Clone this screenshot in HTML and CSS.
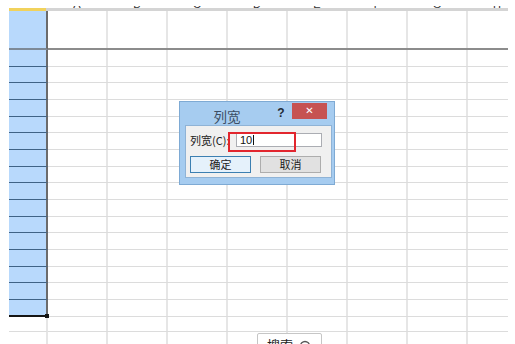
FILE: index.html
```html
<!DOCTYPE html>
<html lang="zh-CN">
<head>
  <meta charset="UTF-8">
  <meta name="viewport" content="width=device-width, initial-scale=1.0">
  <title>列宽</title>
  <link rel="stylesheet" href="styles.css">
</head>
<body>
  <div class="sheet">
    <!-- 列标题 (只露出底部) -->
    <div class="col-head">
      <div class="col-label">A</div>
      <div class="col-label">B</div>
      <div class="col-label">C</div>
      <div class="col-label">D</div>
      <div class="col-label">E</div>
      <div class="col-label">F</div>
      <div class="col-label">G</div>
      <div class="col-label">H</div>
    </div>
    <div class="col-band"><div class="corner"></div></div>

    <div class="row first"><div class="rh"></div><div class="cells"></div></div>
    <div class="row"><div class="rh"></div><div class="cells"></div></div>
    <div class="row"><div class="rh"></div><div class="cells"></div></div>
    <div class="row"><div class="rh"></div><div class="cells"></div></div>
    <div class="row"><div class="rh"></div><div class="cells"></div></div>
    <div class="row"><div class="rh"></div><div class="cells"></div></div>
    <div class="row"><div class="rh"></div><div class="cells"></div></div>
    <div class="row"><div class="rh"></div><div class="cells"></div></div>
    <div class="row"><div class="rh"></div><div class="cells"></div></div>
    <div class="row"><div class="rh"></div><div class="cells"></div></div>
    <div class="row"><div class="rh"></div><div class="cells"></div></div>
    <div class="row"><div class="rh"></div><div class="cells"></div></div>
    <div class="row"><div class="rh"></div><div class="cells"></div></div>
    <div class="row"><div class="rh"></div><div class="cells"></div></div>
    <div class="row"><div class="rh"></div><div class="cells"></div></div>
    <div class="row"><div class="rh"></div><div class="cells"></div></div>
    <div class="row last"><div class="rh"></div><div class="cells"></div></div>
    <div class="row tail"><div class="rh"></div><div class="cells"></div></div>
    <div class="row tail"><div class="rh"></div><div class="cells"></div></div>
  </div>

  <!-- 列宽 对话框 -->
  <div class="dialog">
    <div class="dlg-title">
      <span class="dlg-caption">列宽</span>
      <span class="dlg-help">?</span>
      <span class="dlg-close">&#x2715;</span>
    </div>
    <div class="dlg-panel">
      <div class="dlg-field">
        <span class="dlg-label">列宽(C):</span>
        <span class="dlg-input">10<span class="caret"></span></span>
      </div>
      <div class="dlg-buttons">
        <button class="btn btn-default">确定</button>
        <button class="btn">取消</button>
      </div>
    </div>
    <div class="mark"></div>
  </div>

  <div class="search-chip">
    <span>搜索</span>
    <svg width="12" height="12" viewBox="0 0 12 12"><circle cx="6" cy="6" r="4.5" fill="none" stroke="#555" stroke-width="1.3"/></svg>
  </div>
</body>
</html>
```

FILE: styles.css
```css
body {
  margin: 0;
  height: 344px;
  overflow: hidden;
  background-color: #fff;
  font-family: 'Noto Sans CJK SC', 'Liberation Sans', sans-serif;
  position: relative;
}

.sheet {
  margin-left: 9px;
  width: 499px;
}

/* 列标题: 只看得到字母底部 */
.col-head {
  display: flex;
  margin-top: 6px;
  height: 2px;
  overflow: hidden;
  padding-left: 38px;
}

.col-label {
  flex: none;
  width: 60px;
  margin-top: -7px;
  text-align: center;
  font: 11px/10px 'Liberation Sans', sans-serif;
  color: #333;
}

.col-band {
  height: 3px;
  background-color: #d4d4d4;
}

.corner {
  width: 37px;
  height: 3px;
  background-color: #f1d25c;
}

.row {
  display: flex;
  height: 16.67px;
}

.rh {
  width: 39px;
  box-sizing: border-box;
  background-color: #b8d9fc; /* 选中的行标题 */
  border-right: 2px solid #6b6b6b;
  border-bottom: 1px solid #3f6386;
}

.cells {
  flex: 1;
  box-sizing: border-box;
  border-bottom: 1px solid #dcdcdc;
  background-image: linear-gradient(to right, #e6e6e6 2px, transparent 2px);
  background-size: 60px 100%;
  background-position: 58px 0;
}

.row.first {
  height: 39px;
}

.row.first .rh {
  border-bottom: 2px solid #7d8a98;
}

.row.first .cells {
  border-bottom: 2px solid #8c8c8c;
}

.row.last .rh {
  position: relative;
  border-bottom: 2px solid #151515;
}

/* 填充柄 */
.row.last .rh::after {
  content: '';
  position: absolute;
  right: -3px;
  bottom: -3px;
  width: 4px;
  height: 4px;
  background-color: #151515;
}

.row.tail {
  height: 15.5px;
}

.row.tail .rh {
  background-color: #fff;
  border-right: 2px solid #e6e6e6;
  border-bottom: 1px solid #dcdcdc;
}

/* 对话框 */
.dialog {
  position: absolute;
  left: 179px;
  top: 101px;
  width: 156px;
  height: 84px;
  box-sizing: border-box;
  background-color: #a6ccf0;
  border: 1px solid #7eaad4;
}

.dlg-title {
  display: flex;
  align-items: flex-start;
  height: 23px;
  padding-right: 7px;
}

.dlg-caption {
  flex: 1;
  text-align: center;
  font-size: 13.5px;
  line-height: 29px;
  color: #3c4e64;
}

.dlg-help {
  width: 14px;
  margin-right: 4px;
  font: bold 12px/22px 'Liberation Sans', sans-serif;
  color: #1f2a36;
  text-align: center;
}

.dlg-close {
  width: 35px;
  height: 16px;
  margin-top: 1px;
  background-color: #c65252;
  color: #fff;
  font: bold 10px/16px 'DejaVu Sans', sans-serif;
  text-align: center;
}

.dlg-panel {
  margin-left: 5px;
  width: 147px;
  height: 53px;
  box-sizing: border-box;
  padding: 7px 0 0 4px;
  background-color: #f0f0f0;
  border: 1px solid #8fb3d6;
}

.dlg-field {
  display: flex;
  align-items: center;
  height: 14px;
}

.dlg-label {
  width: 46px;
  font-size: 11px;
  color: #222;
  white-space: nowrap;
}

.dlg-input {
  display: flex;
  align-items: center;
  width: 86px;
  height: 14px;
  box-sizing: border-box;
  padding-left: 3px;
  background-color: #fff;
  border: 1px solid #abadb3;
  font: 11px/12px 'Liberation Sans', sans-serif;
  color: #111;
}

.caret {
  width: 1px;
  height: 10px;
  margin-left: 1px;
  background-color: #111;
}

.dlg-buttons {
  display: flex;
  gap: 9px;
  margin-top: 9px;
}

.btn {
  width: 61px;
  height: 17px;
  padding: 0;
  box-sizing: border-box;
  font-family: 'Noto Sans CJK SC', sans-serif;
  font-size: 11px;
  line-height: 15px;
  color: #222;
  background-color: #e1e1e1;
  border: 1px solid #adadad;
  border-radius: 0;
}

.btn-default {
  background-color: #e5f1fb;
  border-color: #3c7fb1;
}

/* 红色标注框 */
.mark {
  position: absolute;
  left: 48px;
  top: 30px;
  width: 68px;
  height: 20px;
  box-sizing: border-box;
  border: 2px solid #e2262e;
}

.search-chip {
  position: absolute;
  left: 257px;
  top: 333px;
  width: 65px;
  height: 22px;
  box-sizing: border-box;
  display: flex;
  align-items: flex-start;
  gap: 6px;
  padding: 4px 0 0 9px;
  background-color: #fff;
  border: 1px solid #c6c6c6;
  border-radius: 2px;
  font-size: 13px;
  line-height: 14px;
  color: #222;
}

.search-chip svg {
  margin-top: 2px;
}
```
